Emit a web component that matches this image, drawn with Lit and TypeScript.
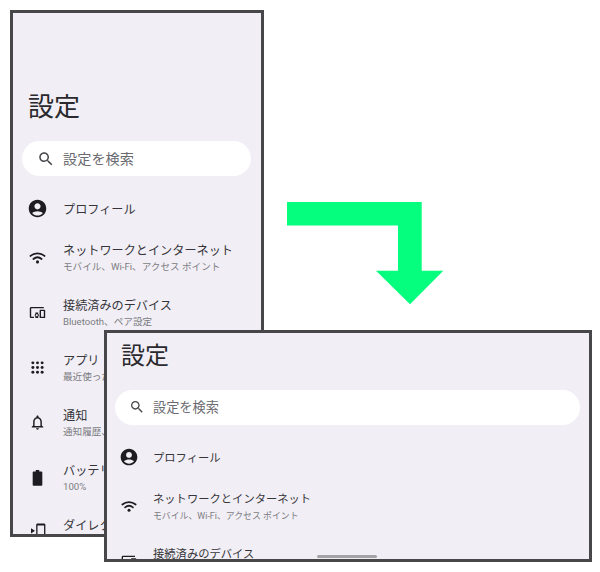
import { LitElement, html, css, svg } from "lit";
import { customElement, property } from "lit/decorators.js";

const P = {
  profile: { box: "0 0 24 24", d: svg`<path d="M12 2C6.48 2 2 6.48 2 12s4.48 10 10 10 10-4.48 10-10S17.52 2 12 2zm0 4c1.93 0 3.5 1.57 3.5 3.5S13.93 13 12 13s-3.5-1.57-3.500-3.500S10.070 6 12 6zm0 14c-2.030 0-4.430-.82-6.140-2.880C7.550 15.800 9.680 15 12 15s4.450.8 6.140 2.120C16.430 19.180 14.030 20 12 20z"/>` },
  wifi: { box: "0 0 24 24", d: svg`<g fill="none" stroke="currentColor" stroke-width="2.1" stroke-linecap="round"><path d="M4 10.200c4.600-4 11.400-4 16 0"/><path d="M7.300 13.700c2.800-2.400 6.600-2.400 9.400 0"/></g><circle cx="12" cy="17" r="1.800"/>` },
  devices: { box: "-3 -3 30 30", d: svg`<path d="M3 6h18V4H3c-1.100 0-2 .9-2 2v12c0 1.100.9 2 2 2h4v-2H3V6zm10 6H9v1.780c-.61.550-1 1.330-1 2.220s.39 1.670 1 2.220V20h4v-1.780c.61-.55 1-1.340 1-2.220s-.39-1.670-1-2.220V12zm-2 5.500c-.83 0-1.500-.67-1.500-1.500s.67-1.500 1.500-1.500 1.500.67 1.500 1.500-.67 1.500-1.500 1.500zM22 8h-6c-.5 0-1 .5-1 1v10c0 .5.5 1 1 1h6c.5 0 1-.5 1-1V9c0-.5-.5-1-1-1zm-1 10h-4v-8h4v8z"/>` },
  apps: { box: "0 0 24 24", d: svg`${[6.700, 12, 17.300].flatMap((y) => [6.700, 12, 17.300].map((x) => svg`<circle cx=${x} cy=${y} r="1.700"/>`))}` },
  bell: { box: "-2.500 -2.500 29 29", d: svg`<path d="M12 22c1.100 0 2-.9 2-2h-4c0 1.100.9 2 2 2zm6-6v-5c0-3.070-1.630-5.640-4.500-6.320V4c0-.83-.67-1.500-1.500-1.500s-1.500.67-1.500 1.500v.68C7.640 5.360 6 7.920 6 11v5l-2 2v1h16v-1l-2-2zm-2 1H8v-6c0-2.480 1.510-4.500 4-4.500s4 2.020 4 4.500v6z"/>` },
  battery: { box: "0 0 24 24", d: svg`<path d="M10 3.500h4v1.500h2.200c.7 0 1.300.6 1.300 1.300v13.900c0 .7-.6 1.300-1.300 1.300H7.800c-.7 0-1.300-.6-1.300-1.300V6.300C6.500 5.600 7.100 5 7.800 5H10z"/>` },
  direct: { box: "0 0 24 24", d: svg`<path d="M12 1.700h7.500c.8 0 1.500.7 1.500 1.500v18c0 .8-.7 1.500-1.500 1.500H12c-.8 0-1.500-.7-1.500-1.500V3.200c0-.8.7-1.500 1.500-1.500zm0 2.300v16h7.500V4z"/><path d="M4.600 7l4.500 3-4.500 3z"/>` },
};

const search = svg`<path d="M15.500 14h-.79l-.28-.27C15.410 12.590 16 11.110 16 9.500 16 5.910 13.090 3 9.500 3S3 5.910 3 9.500 5.910 16 9.500 16c1.610 0 3.090-.59 4.230-1.570l.27.28v.79l5 4.990L20.490 19l-4.990-5zm-6 0C7.010 14 5 11.990 5 9.500S7.010 5 9.500 5 14 7.010 14 9.500 11.990 14 9.500 14z"/>`;

const ROWS = [
  { icon: P.profile, title: "プロフィール", sub: "", short: true },
  { icon: P.wifi, title: "ネットワークとインターネット", sub: "モバイル、Wi-Fi、アクセス ポイント" },
  { icon: P.devices, title: "接続済みのデバイス", sub: "Bluetooth、ペア設定" },
  { icon: P.apps, title: "アプリ", sub: "最近使ったアプリ、デフォルトのアプリ" },
  { icon: P.bell, title: "通知", sub: "通知履歴、会話" },
  { icon: P.battery, title: "バッテリー", sub: "100%" },
  { icon: P.direct, title: "ダイレクト シェア", sub: "おすすめ" },
];

@customElement("settings-screen")
class SettingsScreen extends LitElement {
  @property({ type: Number }) count = 7;

  static styles = css`
    :host {
      display: block;
      height: 100%;
      box-sizing: border-box;
      background: #f1eff5;
      color: #1d1c20;
      padding-top: var(--top);
      overflow: hidden;
      font-family: Roboto, "Noto Sans CJK JP", sans-serif;
    }
    svg { fill: currentColor; display: block; flex: none; }
    h1 {
      margin: 0 0 16px var(--title-left);
      font-size: var(--title-size);
      line-height: 40px;
      font-weight: 400;
      color: #2a292e;
      font-family: "Noto Sans CJK JP", sans-serif;
    }
    .search {
      height: 35px;
      margin: 0 var(--bar-right) 11.500px var(--bar-left);
      background: #fff;
      border-radius: 18px;
      display: flex;
      align-items: center;
      color: #6a6a70;
      font-size: var(--search-size);
    }
    .search svg {
      width: var(--search-icon);
      height: var(--search-icon);
      margin-left: var(--search-left);
      color: #48484c;
    }
    .search span { margin-left: var(--search-gap); padding-bottom: 2px; }
    .row {
      height: 55px;
      display: flex;
      align-items: center;
      padding-left: var(--icon-left);
    }
    .row.short { height: 43px; }
    .icon { width: var(--icon); height: var(--icon); margin-bottom: 2px; }
    .text { margin-left: var(--text-gap); padding-top: 2px; white-space: nowrap; }
    .title { font-size: var(--row-size); line-height: 16px; color: #36353a; }
    .sub { font-size: var(--sub-size); line-height: 16px; color: #7c7c82; }
  `;

  render() {
    return html`
      <h1>設定</h1>
      <div class="search">
        <svg viewBox="0 0 24 24">${search}</svg>
        <span>設定を検索</span>
      </div>
      ${ROWS.slice(0, this.count).map(
        (r) => html`
          <div class="row ${r.short ? "short" : ""}">
            <svg class="icon" viewBox=${r.icon.box}>${r.icon.d}</svg>
            <div class="text">
              <div class="title">${r.title}</div>
              ${r.sub ? html`<div class="sub">${r.sub}</div>` : ""}
            </div>
          </div>
        `
      )}
    `;
  }
}

@customElement("app-root")
export class AppRoot extends LitElement {
  static styles = css`
    :host {
      display: block;
      position: relative;
      width: 600px;
      height: 572px;
      background: #fff;
      overflow: hidden;
    }
    .frame {
      position: absolute;
      box-sizing: border-box;
      border: 3px solid #47474a;
    }
    .one {
      left: 10px; top: 10px; width: 254px; height: 527px;
      --top: 72px;
      --title-left: 15px;
      --title-size: 26px;
      --bar-left: 9px;
      --bar-right: 10px;
      --search-size: 14.200px;
      --search-icon: 18px;
      --search-left: 14.500px;
      --search-gap: 8.500px;
      --icon: 21px;
      --icon-left: 13.500px;
      --text-gap: 15.500px;
      --row-size: 12.150px;
      --sub-size: 9.600px;
    }
    .two {
      left: 104px; top: 330px; width: 488px; height: 232px;
      --top: 0.500px;
      --title-left: 14px;
      --title-size: 24px;
      --bar-left: 8px;
      --bar-right: 9px;
      --search-size: 13.200px;
      --search-icon: 16px;
      --search-left: 13.500px;
      --search-gap: 8.500px;
      --icon: 20px;
      --icon-left: 12px;
      --text-gap: 14px;
      --row-size: 11.300px;
      --sub-size: 8.900px;
    }
    .pill {
      position: absolute;
      left: 210px;
      bottom: 1.500px;
      width: 60px;
      height: 3px;
      border-radius: 2px;
      background: #a3a3a6;
    }
    .arrow { position: absolute; left: 0; top: 0; display: block; }
  `;

  render() {
    return html`
      <div class="frame one"><settings-screen></settings-screen></div>
      <svg class="arrow" width="600" height="572" viewBox="0 0 600 572">
        <polygon fill="#05fe7e" points="287,202 421.700,202 421.700,270.700 443.300,270.700 410,304.300 376,270.700 398,270.700 398,225.400 287,225.400"/>
      </svg>
      <div class="frame two">
        <settings-screen .count=${3}></settings-screen>
        <div class="pill"></div>
      </div>
    `;
  }
}
